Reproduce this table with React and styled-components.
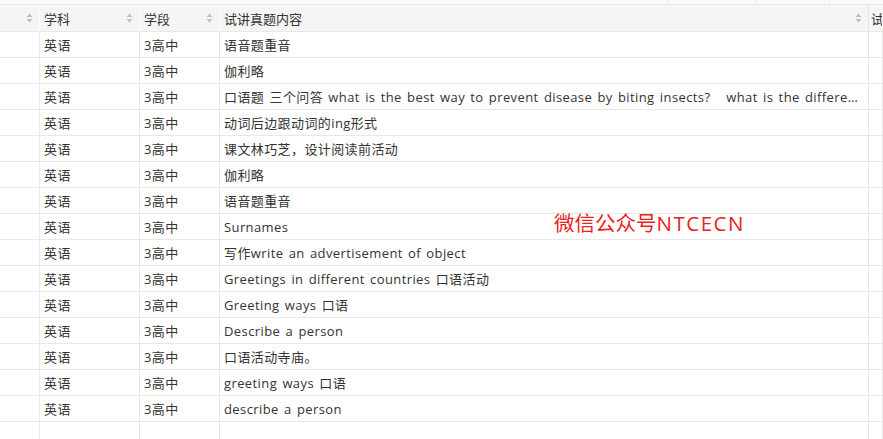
import React from "react";
import styled, { createGlobalStyle } from "styled-components";

const rows = [
  "语音题重音",
  "伽利略",
  "口语题 三个问答 what is the best way to prevent disease by biting insects?   what is the difference between people in the past and now",
  "动词后边跟动词的ing形式",
  "课文林巧芝，设计阅读前活动",
  "伽利略",
  "语音题重音",
  "Surnames",
  "写作write an advertisement of object",
  "Greetings in different countries 口语活动",
  "Greeting ways 口语",
  "Describe a person",
  "口语活动寺庙。",
  "greeting ways 口语",
  "describe a person",
];

const COLS = "40px 100px 80px 649px 1fr";

const Global = createGlobalStyle`
  html, body {
    margin: 0;
    padding: 0;
    background: #fff;
    overflow: hidden;
  }
  body {
    font-family: "Open Sans", "Noto Sans CJK SC", sans-serif;
    font-size: 13px;
    color: #333;
  }
`;

const Sheet = styled.div`
  position: relative;
  width: 883px;
  height: 439px;
  overflow: hidden;
`;

const Strip = styled.div`
  height: 4px;
  background: #fafafa;
  border-bottom: 1px solid #e8e8e8;
  display: grid;
  grid-template-columns: 668px 89px 73px 1fr;
`;

const StripCell = styled.div`
  border-right: 1px solid #ececec;
`;

const HeadRow = styled.div`
  display: grid;
  grid-template-columns: ${COLS};
  height: 27px;
  background: #f5f5f5;
  border-bottom: 1px solid #e8e8e8;
  box-sizing: border-box;
`;

const HeadCell = styled.div`
  display: flex;
  align-items: center;
  justify-content: space-between;
  padding: 0 6px 0 4px;
  border-right: 1px solid ${(p) => (p.$dark ? "#e4e4e4" : "#fbfbfb")};
  white-space: nowrap;
  overflow: hidden;
  color: #333;
`;

const Row = styled.div`
  display: grid;
  grid-template-columns: ${COLS};
  height: 26px;
  border-bottom: 1px solid #e8e8e8;
  box-sizing: border-box;
`;

const Cell = styled.div`
  display: flex;
  align-items: center;
  padding: 0 4px;
  border-right: 1px solid #e8e8e8;
  min-width: 0;
`;

const Text = styled.span`
  white-space: pre;
  overflow: hidden;
  text-overflow: ellipsis;
  line-height: 18px;
  letter-spacing: 0.4px;
  word-spacing: 1.5px;
`;

const Filler = styled.div`
  display: grid;
  grid-template-columns: ${COLS};
  height: 18px;
`;

const Mark = styled.div`
  position: absolute;
  left: 554px;
  top: 209px;
  font-size: 20.5px;
  line-height: 28px;
  color: #e8231e;
  white-space: nowrap;
`;

const MarkLatin = styled.span`
  letter-spacing: 1.5px;
`;

function SortIcon() {
  return (
    <svg width="7" height="10" viewBox="0 0 7 10">
      <path d="M3.5 0.5 L6.5 4 L0.5 4 Z" fill="#bfbfbf" />
      <path d="M3.5 9.5 L6.5 6 L0.5 6 Z" fill="#bfbfbf" />
    </svg>
  );
}

export default function App() {
  return (
    <>
      <Global />
      <Sheet>
        <Strip>
          <StripCell />
          <StripCell />
          <StripCell />
          <div />
        </Strip>
        <HeadRow>
          <HeadCell>
            <span />
            <SortIcon />
          </HeadCell>
          <HeadCell>
            <span>学科</span>
            <SortIcon />
          </HeadCell>
          <HeadCell>
            <span>学段</span>
            <SortIcon />
          </HeadCell>
          <HeadCell $dark>
            <span>试讲真题内容</span>
            <SortIcon />
          </HeadCell>
          <HeadCell style={{ paddingLeft: 2 }}>
            <span>试讲</span>
          </HeadCell>
        </HeadRow>
        {rows.map((r, i) => (
          <Row key={i}>
            <Cell />
            <Cell>
              <Text>英语</Text>
            </Cell>
            <Cell>
              <Text>3高中</Text>
            </Cell>
            <Cell>
              <Text>{r}</Text>
            </Cell>
            <Cell />
          </Row>
        ))}
        <Filler>
          <Cell />
          <Cell />
          <Cell />
          <Cell />
          <Cell />
        </Filler>
        <Mark>
          微信公众号<MarkLatin>NTCECN</MarkLatin>
        </Mark>
      </Sheet>
    </>
  );
}
